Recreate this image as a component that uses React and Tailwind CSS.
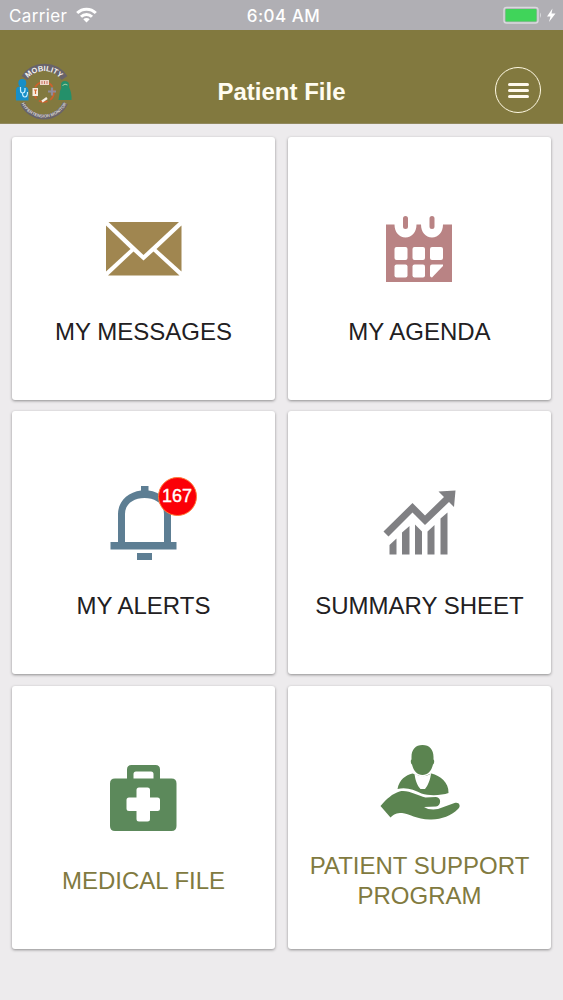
const ICON = "block h-[100px] w-[100px] shrink-0";

function Envelope() {
  return (
    <svg className={ICON} viewBox="94 199 100 100" fill="#a08650">
      <path d="M108.500 222H179L143.500 255Z" />
      <path d="M106 225.500L130.500 249L106 271.500Z" />
      <path d="M181.500 225.500V271.500L156.500 249Z" />
      <path d="M133.500 251.500L143.500 260.500L153.500 251.500L179.500 275.500H108Z" />
    </svg>
  );
}

function Calendar() {
  return (
    <svg className={ICON} viewBox="370 199 100 100">
      <path fill="#b98384" d="M386 224.500H394.500C394.500 232 399 237.500 405.500 237.500C412 237.500 416.500 232 416.500 224.500H421C421 232 425.500 237.500 432 237.500C438.500 237.500 443 232 443 224.500H452V282H386Z" />
      <g stroke="#b98384" strokeWidth="5" strokeLinecap="round">
        <path d="M405.500 218.500V226.500M432 218.500V226.500" />
      </g>
      <g fill="#fff">
        <rect x="394.500" y="247" width="13" height="13" rx="2" />
        <rect x="412.500" y="247" width="12.500" height="13" rx="2" />
        <rect x="430" y="247" width="13" height="13" rx="2" />
        <rect x="394.500" y="264.500" width="13" height="13" rx="2" />
        <rect x="412.500" y="264.500" width="12.500" height="13" rx="2" />
        <path d="M432 264.500H443V266L432 277.500Q430 277.500 430 275.500V266.500Q430 264.500 432 264.500Z" />
      </g>
    </svg>
  );
}

function Bell() {
  return (
    <svg className={ICON} viewBox="94 473 100 100" fill="#5d7e93">
      <path d="M141 486H148.500V490.500C161.500 492 171 501.500 171 514V542H176.500V549.500H110.500V542H118V514C118 501.500 128 492 141 490.500ZM125 542H164V514C164 504 155.500 498 144.500 498C133.500 498 125 504 125 514Z" fillRule="evenodd" />
      <rect x="137" y="553" width="15" height="7" />
    </svg>
  );
}

function Growth() {
  return (
    <svg className={ICON} viewBox="370 473 100 100" fill="#808083">
      <path d="M383.500 531.500L412.500 503L425 515.500L444 497L438.500 491.500L455.500 490.500L454 507L449 502L425 525L412.500 512.500L388.500 536.500Z" />
      <path d="M389.500 554.500V545L396.500 538.500V554.500ZM402 554.500V532.500L409.500 526V554.500ZM415 554.500V524.500L422 531.500V554.500ZM427.500 554.500V531.500L434.500 525V554.500ZM440.500 554.500V518.500L447.500 512.500V554.500Z" />
    </svg>
  );
}

function MedicalKit() {
  return (
    <svg className={ICON} viewBox="94 748 100 100">
      <path fill="#5c895b" fillRule="evenodd" d="M127 778.500V769.500Q127 765 131.500 765H155.500Q160 765 160 769.500V778.500H171.500Q176.500 778.500 176.500 783.500V826Q176.500 831 171.500 831H115Q110 831 110 826V783.500Q110 778.500 115 778.500ZM133.500 778.500H153.500V774Q153.500 771.500 151 771.500H136Q133.500 771.500 133.500 774Z" />
      <path fill="#fff" d="M139 787.500H147.500Q150 787.500 150 790V797.500H157.500Q160 797.500 160 800V808.500Q160 811 157.500 811H150V819Q150 821.500 147.500 821.500H139Q136.500 821.500 136.500 819V811H129Q126.500 811 126.500 808.500V800Q126.500 797.500 129 797.500H136.500V790Q136.500 787.500 139 787.500Z" />
    </svg>
  );
}

function CareHand() {
  return (
    <svg className={ICON} viewBox="370 733 100 100" fill="#5b8450">
      <path d="M422.500 745C429.500 745 433.500 749.500 433.500 757V759.500C434.500 760 434.500 763.500 433 764.500C431.500 771 427.500 775 422.500 775C417.500 775 413.500 771 412 764.500C410.500 763.500 410.500 760 411.500 759.500V757C411.500 749.500 415.500 745 422.500 745Z" />
      <path d="M412.500 773.500L422.500 777L431.500 773.500C440 776 449 782 448.500 793C441.500 795.500 429 796 421.500 793.500C414 790 407 787 397.500 789C399.500 779 405.500 775.500 412.500 773.500Z" />
      <path fill="#fff" d="M414.500 773.500C419.500 777 426 777 431 773.500C430.500 779 428 785.500 425 789H420.500C417 785.500 415 779 414.500 773.500Z" />
      <path d="M380.500 806C386.500 799 392.500 793.500 399.500 791.500C408.500 789.500 417.500 796 425.500 797.500L436 797C441.500 797 441.500 806 436 806.500L424 807C427.500 809.500 433 810 438 809L454.500 803C459 801.500 461.500 806 458 809C451 816 442 819 431.500 819.500C417 820 409.500 813.500 402 813C396 813 394.500 814 390.500 817.500Z" />
    </svg>
  );
}

function Logo() {
  return (
    <svg className="block h-[62px] w-[62px] shrink-0" viewBox="12 61 62 62">
      <defs>
        <path id="logo-top" d="M24.500 83.500A21.500 21.500 0 0 1 63.500 83.500" />
        <path id="logo-bottom" d="M20.500 101A25 25 0 0 0 67.500 101" />
      </defs>
      <path d="M24.500 78A24 24 0 0 1 64.500 78" fill="none" stroke="#68636a" strokeWidth="7" />
      <path d="M22.500 103A23.500 23.500 0 0 0 65.500 103" fill="none" stroke="#68636a" strokeWidth="5" />
      <text fill="#f5f3ed" fontSize="7.500" fontWeight="700" textAnchor="middle">
        <textPath href="#logo-top" startOffset="50%">MOBILITY</textPath>
      </text>
      <text fill="#d7d3ce" fontSize="4.300" fontWeight="700" textAnchor="middle">
        <textPath href="#logo-bottom" startOffset="50%">HYPERTENSION MONITOR</textPath>
      </text>
      <circle cx="44" cy="92" r="10" fill="none" stroke="#cf602c" strokeWidth="1.600" strokeDasharray="9 3" />
      <g fill="#168fc8">
        <circle cx="22.300" cy="83" r="4" />
        <path d="M16 90Q16 86.500 20 86.500H25Q28.500 87 28.500 91V100.500H16Z" />
      </g>
      <path d="M20.500 87V90Q20.500 93 22.500 93Q25 93 25 90V88M22.500 93Q22.500 97 25 97Q27.500 97 27.500 92" fill="none" stroke="#c8efff" strokeWidth="1.200" />
      <path d="M65 81Q70 81 69 87Q72 93 71.500 100H58.500L60 91Q62 88 61 85Q61 81 65 81Z" fill="#24906a" />
      <path d="M62.500 85.500Q65 83 67.500 85" fill="none" stroke="#acd0a3" strokeWidth="1" />
      <rect x="40" y="80" width="9" height="5" fill="#edd8cb" />
      <path d="M42 81V84M44.500 81V84M47 81V84" stroke="#c45e4b" strokeWidth=".8" />
      <rect x="32.500" y="88" width="5.500" height="8" fill="#f7ece0" />
      <path d="M34 90H37M35.500 90V94" stroke="#d66b33" strokeWidth="1.200" />
      <path d="M52 87.500V95.500M48 91.500H56" stroke="#908b9c" strokeWidth="2.200" />
      <path d="M42 101.500L47 98" stroke="#f5eee2" strokeWidth="2.300" />
    </svg>
  );
}

function StatusBar() {
  return (
    <div className="grid h-[30px] grid-cols-3 items-center bg-[#b0afb4] pl-[9px] pr-[6px] font-[Inter,sans-serif] text-white">
      <div className="flex items-center gap-[9px]">
        <span className="w-[58px] whitespace-nowrap pt-[3px] text-[17px] tracking-[0.350px]">Carrier</span>
        <svg className="h-[16px] w-[21px]" viewBox="0 0 21 16" fill="none" stroke="#fff" strokeWidth="3">
          <path d="M1.200 6A13.200 13.200 0 0 1 19.800 6" />
          <path d="M5 9.700A7.800 7.800 0 0 1 16 9.700" />
          <path d="M10.500 15.500L7.300 12.300A4.600 4.600 0 0 1 13.700 12.300Z" fill="#fff" stroke="none" />
        </svg>
      </div>
      <span className="whitespace-nowrap pl-px pt-[3px] text-center text-[17px] font-medium tracking-[0.500px]">6:04 AM</span>
      <div className="flex items-center justify-end">
        <svg className="h-[18px] w-[54px]" viewBox="503 6 54 18">
          <rect x="504" y="7.500" width="34" height="15.500" rx="2.500" fill="none" stroke="#d9dadd" strokeWidth="1.400" />
          <rect x="505.500" y="9" width="31" height="12.500" rx="1" fill="#40d45a" />
          <path d="M540 12.500Q542 15 540 18Z" fill="#d9dadd" />
          <path d="M552.500 8.500L547 16.500H550.500L549 22L555.500 13.500H551.500Z" fill="#fff" />
        </svg>
      </div>
    </div>
  );
}

function Header() {
  return (
    <header className="grid h-[94px] grid-cols-[62px_1fr_62px] items-start border-b border-[#91895e] bg-[#82793f] px-3 pt-[31px]">
      <Logo />
      <h1 className="mt-[15px] whitespace-nowrap text-center text-[24px] font-bold leading-[32px] text-[#fffcf0]">Patient File</h1>
      <button aria-label="Menu" className="mr-[10px] mt-[6px] flex h-[46px] w-[46px] items-center justify-center justify-self-end rounded-full border-[1.500px] border-[#fff9e3]">
        <span className="flex w-[21px] flex-col gap-[3px]">
          <span className="h-[3px] rounded-full bg-[#fff9ed]" />
          <span className="h-[3px] rounded-full bg-[#fff9ed]" />
          <span className="h-[3px] rounded-full bg-[#fff9ed]" />
        </span>
      </button>
    </header>
  );
}

function Card({ icon, label, badge, green, tall }) {
  return (
    <div className={`relative flex h-[263px] flex-col items-center gap-[18px] rounded-[3px] bg-white shadow-[0_1px_3px_rgba(0,0,0,0.4)] ${tall ? "pt-[47px]" : "pt-[62px]"}`}>
      {icon}
      {badge && (
        <span className="absolute left-[145.500px] top-[66px] flex h-[39px] w-[39px] items-center justify-center rounded-full border border-[#ff7a38] bg-[#fb0007] text-[18px] text-white [-webkit-text-stroke:0.400px_white]">
          {badge}
        </span>
      )}
      <div className={`whitespace-pre text-center text-[24px] leading-[30px] ${green ? "text-[#817a40]" : "text-[#222022]"}`}>{label}</div>
    </div>
  );
}

export default function App() {
  return (
    <div className="h-[1000px] w-[563px] overflow-hidden bg-[#edebed] font-['Liberation_Sans',Arial,sans-serif]">
      <StatusBar />
      <Header />
      <main className="grid grid-cols-2 gap-x-[13px] gap-y-[11.500px] px-3 pt-[12.500px]">
        <Card icon={<Envelope />} label="MY MESSAGES" />
        <Card icon={<Calendar />} label="MY AGENDA" />
        <Card icon={<Bell />} label="MY ALERTS" badge="167" />
        <Card icon={<Growth />} label="SUMMARY SHEET" />
        <Card icon={<MedicalKit />} label="MEDICAL FILE" green />
        <Card icon={<CareHand />} label={"PATIENT SUPPORT\nPROGRAM"} green tall />
      </main>
    </div>
  );
}
